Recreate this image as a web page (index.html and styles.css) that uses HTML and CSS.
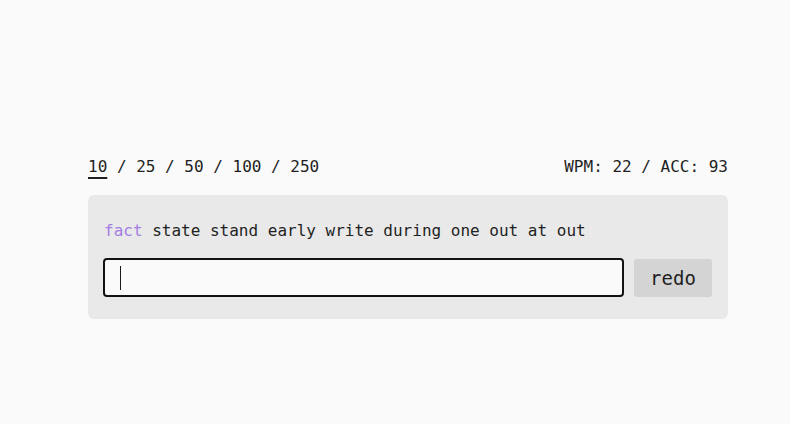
FILE: index.html
```html
<!DOCTYPE html>
<html lang="en">
<head>
<meta charset="utf-8">
<title>typing test</title>
<link rel="stylesheet" href="styles.css">
</head>
<body>
<main class="app">
  <header class="topbar">
    <nav class="counts"><span class="count active">10</span> / <span class="count">25</span> / <span class="count">50</span> / <span class="count">100</span> / <span class="count">250</span></nav>
    <div class="stats">WPM: 22 / ACC: 93</div>
  </header>
  <section class="card">
    <p class="words"><span class="current">fact</span> state stand early write during one out at out</p>
    <div class="controls">
      <div class="input" role="textbox" aria-label="type here"><span class="caret"></span></div>
      <button class="redo" type="button">redo</button>
    </div>
  </section>
</main>
</body>
</html>
```

FILE: styles.css
```css
html, body {
  margin: 0;
  padding: 0;
  background: #fafafa;
}

body {
  font-family: "DejaVu Sans Mono", "Liberation Mono", monospace;
  color: #1f1f1f;
  font-size: 16px;
}

.app {
  width: 640px;
  margin-left: 88px;
  padding-top: 157px;
}

.topbar {
  display: flex;
  justify-content: space-between;
  align-items: center;
  line-height: 19px;
  height: 19px;
}

.counts,
.stats {
  white-space: nowrap;
}

.count.active {
  text-decoration: underline;
  text-decoration-thickness: 2px;
  text-underline-offset: 5px;
}

.card {
  margin-top: 19px;
  background: #e9e9e9;
  border-radius: 6px;
  padding: 24px 16px 22px 15px;
}

.words {
  margin: 0 0 0 1px;
  line-height: 24px;
  white-space: nowrap;
}

.current {
  color: #a47de3;
}

.controls {
  margin-top: 15px;
  display: flex;
  gap: 10px;
  align-items: center;
}

.input {
  flex: 1;
  height: 35px;
  border: 2px solid #121212;
  border-radius: 4px;
  background: #fafafa;
  display: flex;
  align-items: center;
  padding-left: 15px;
}

.caret {
  display: block;
  width: 1px;
  height: 24px;
  background: #1a1a1a;
}

.redo {
  width: 78px;
  height: 38px;
  border: none;
  border-radius: 3px;
  background: #d4d4d4;
  color: #1f1f1f;
  font-family: "DejaVu Sans Mono", "Liberation Mono", monospace;
  font-size: 19px;
  padding: 0;
}
```
